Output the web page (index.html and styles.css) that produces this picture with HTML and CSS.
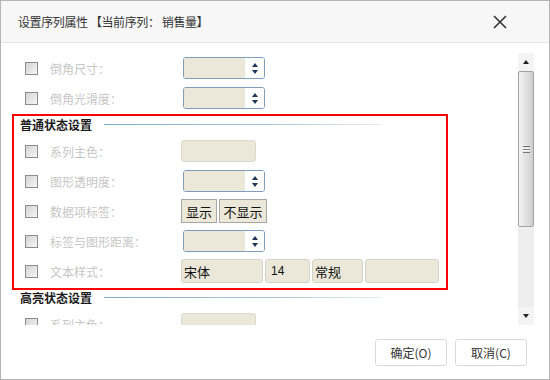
FILE: index.html
```html
<!DOCTYPE html>
<html>
<head>
<meta charset="utf-8">
<link rel="stylesheet" href="styles.css">
</head>
<body>
<div class="dialog">
  <div class="titlebar">
    <span class="title">设置序列属性 【当前序列： 销售量】</span>
    <svg class="close" width="14" height="14" viewBox="0 0 14 14"><path d="M1 1L13 13M13 1L1 13" stroke="#333" stroke-width="1.6" fill="none"/></svg>
  </div>
  <div class="body">
    <div class="viewport">
      <div class="content">
        <div class="row">
          <span class="check"></span><span class="label">倒角尺寸：</span>
          <div class="spin"><div class="spin-field"></div><div class="spin-btns"><i class="up"></i><i class="down"></i></div></div>
        </div>
        <div class="row">
          <span class="check"></span><span class="label">倒角光滑度：</span>
          <div class="spin"><div class="spin-field"></div><div class="spin-btns"><i class="up"></i><i class="down"></i></div></div>
        </div>

        <div class="section-head"><span class="head-text">普通状态设置</span><span class="head-line"></span></div>
        <div class="row">
          <span class="check"></span><span class="label">系列主色：</span>
          <div class="color-box"></div>
        </div>
        <div class="row">
          <span class="check"></span><span class="label">图形透明度：</span>
          <div class="spin"><div class="spin-field"></div><div class="spin-btns"><i class="up"></i><i class="down"></i></div></div>
        </div>
        <div class="row">
          <span class="check"></span><span class="label">数据项标签：</span>
          <div class="btn-group"><span class="tbtn w36">显示</span><span class="tbtn w48">不显示</span></div>
        </div>
        <div class="row">
          <span class="check"></span><span class="label">标签与图形距离：</span>
          <div class="spin"><div class="spin-field"></div><div class="spin-btns"><i class="up"></i><i class="down"></i></div></div>
        </div>
        <div class="row">
          <span class="check"></span><span class="label">文本样式：</span>
          <div class="font-group">
            <span class="fbox w82">宋体</span>
            <span class="fbox w45 num">14</span>
            <span class="fbox w51">常规</span>
            <span class="fbox w74"></span>
          </div>
        </div>

        <div class="section-head"><span class="head-text">高亮状态设置</span><span class="head-line"></span></div>
        <div class="row">
          <span class="check"></span><span class="label">系列主色：</span>
          <div class="color-box"></div>
        </div>

        <div class="highlight"></div>
      </div>
    </div>
    <div class="scrollbar">
      <div class="sb-btn"><i class="sb-up"></i></div>
      <div class="sb-thumb"><span class="grip"></span></div>
      <div class="sb-track"></div>
      <div class="sb-btn"><i class="sb-down"></i></div>
    </div>
  </div>
  <div class="footer">
    <button class="dbtn">确定(O)</button>
    <button class="dbtn">取消(C)</button>
  </div>
</div>
</body>
</html>
```

FILE: styles.css
```css
html, body {
  margin: 0;
  padding: 0;
  background: #fff;
}

body {
  font-family: "Noto Sans CJK SC", "Liberation Sans", sans-serif;
  font-size: 12px;
  color: #333;
}

.dialog {
  width: 550px;
  height: 380px;
  box-sizing: border-box;
  border: 1px solid #b4b4b4;
  background: #fff;
  display: flex;
  flex-direction: column;
}

.titlebar {
  height: 41px;
  flex: none;
  background: #f7f7f7;
  border-bottom: 1px solid #e6e6e6;
  display: flex;
  align-items: center;
  justify-content: space-between;
  padding: 0 42px 0 17px;
}

.title {
  font-size: 12px;
  color: #333;
  line-height: 14px;
  letter-spacing: -0.4px;
  white-space: pre;
}

.close {
  display: block;
}

.body {
  display: flex;
  padding-top: 10px;
  flex: none;
}

.viewport {
  width: 517px;
  height: 272px;
  overflow: hidden;
}

.content {
  position: relative;
}

.row {
  height: 30px;
  display: flex;
  align-items: center;
  padding-left: 24px;
}

.check {
  width: 13px;
  height: 13px;
  box-sizing: border-box;
  border: 1px solid #8c8c8c;
  background: linear-gradient(135deg, #d4d4d4, #f6f6f6);
  flex: none;
}

.label {
  width: 131px;
  margin-left: 12px;
  color: #c6c6c6;
  flex: none;
}

.spin {
  width: 82px;
  height: 22px;
  box-sizing: border-box;
  border: 1px solid #7f9db9;
  border-radius: 3px;
  margin-left: 2px;
  display: flex;
  overflow: hidden;
}

.spin-field {
  flex: 1;
  background: #ebe8d9;
}

.spin-btns {
  width: 19px;
  background: #fff;
  display: flex;
  flex-direction: column;
  align-items: center;
  justify-content: center;
  gap: 3px;
}

.up, .down {
  display: block;
  width: 0;
  height: 0;
  border-left: 3.5px solid transparent;
  border-right: 3.5px solid transparent;
}

.up {
  border-bottom: 4px solid #1d3657;
}

.down {
  border-top: 4px solid #1d3657;
}

.color-box {
  width: 75px;
  height: 22px;
  box-sizing: border-box;
  border: 1px solid #dcdad0;
  border-radius: 3px;
  background: #ebe8d9;
}

.btn-group {
  display: flex;
  gap: 2px;
}

.tbtn {
  height: 24px;
  box-sizing: border-box;
  border: 1px solid #a6a6a6;
  background: #ebe8d9;
  color: #111;
  font-size: 13px;
  display: flex;
  align-items: center;
  justify-content: center;
}

.w36 { width: 36px; }
.w48 { width: 48px; }

.font-group {
  display: flex;
  gap: 2px;
}

.fbox {
  height: 24px;
  box-sizing: border-box;
  border: 1px solid #d4d2c8;
  border-radius: 3px;
  background: #ebe8d9;
  color: #111;
  font-size: 13px;
  display: flex;
  align-items: center;
  padding-left: 2px;
}

.num {
  font-family: "Liberation Sans", sans-serif;
  font-size: 12px;
  padding-left: 5px;
}

.w82 { width: 82px; }
.w45 { width: 45px; }
.w51 { width: 51px; }
.w74 { width: 74px; }

.section-head {
  height: 23px;
  display: flex;
  align-items: center;
  padding-left: 19px;
}

.head-text {
  font-weight: bold;
  color: #1a1a1a;
  width: 72px;
  flex: none;
}

.head-line {
  width: 278px;
  height: 1px;
  margin-left: 12px;
  background: linear-gradient(to right, #86a8c4, #a9c3d8 60%, #e4edf4);
}

.highlight {
  position: absolute;
  left: 11px;
  top: 61px;
  width: 436px;
  height: 176px;
  box-sizing: border-box;
  border: 2px solid #f00;
}

.scrollbar {
  width: 16px;
  height: 272px;
  background: #f0f0f0;
  display: flex;
  flex-direction: column;
}

.sb-btn {
  height: 18px;
  flex: none;
  background: #f4f4f4;
  display: flex;
  align-items: center;
  justify-content: center;
}

.sb-up, .sb-down {
  display: block;
  width: 0;
  height: 0;
  border-left: 3.5px solid transparent;
  border-right: 3.5px solid transparent;
}

.sb-up {
  border-bottom: 4px solid #222;
}

.sb-down {
  border-top: 4px solid #222;
}

.sb-thumb {
  height: 156px;
  flex: none;
  box-sizing: border-box;
  border: 1px solid #a3a3a3;
  border-radius: 2px;
  background: linear-gradient(to right, #f2f2f2, #e2e2e2 50%, #cdcdcd);
  display: flex;
  align-items: center;
  justify-content: center;
}

.grip {
  width: 7px;
  height: 5px;
  border-top: 1px solid #777;
  border-bottom: 1px solid #777;
  background: linear-gradient(#fff 0 1px, #777 1px 2px, #fff 2px);
  background-size: 100% 3px;
  background-position: 0 1px;
  background-repeat: no-repeat;
}

.sb-track {
  flex: 1;
  background: #eeeeee;
}

.footer {
  display: flex;
  justify-content: flex-end;
  gap: 8px;
  padding: 14px 22px 0 0;
}

.dbtn {
  width: 72px;
  height: 27px;
  box-sizing: border-box;
  border: 1px solid #dadada;
  border-radius: 3px;
  background: #fff;
  font-family: "Noto Sans CJK SC", "Liberation Sans", sans-serif;
  font-size: 12px;
  color: #333;
  padding: 0;
}
```
